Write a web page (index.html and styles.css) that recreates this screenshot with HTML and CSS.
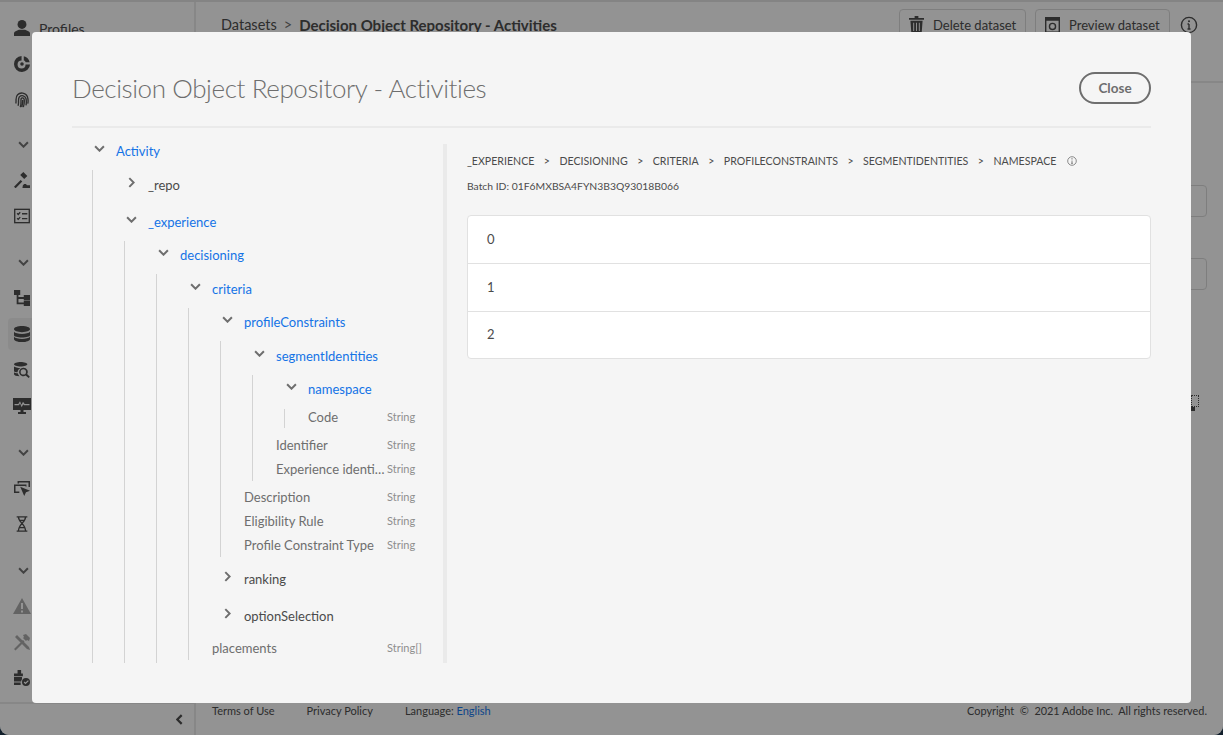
FILE: index.html
```html
<!DOCTYPE html>
<html lang="en">
<head>
    <meta charset="UTF-8">
    <meta name="viewport" content="width=device-width, initial-scale=1.0">
    <title>Datasets</title>
    <link rel="stylesheet" href="styles.css">
</head>
<body>
    <div class="app">
        <aside class="sidebar">
            <nav class="side-nav">
                <div class="side-item">
                    <svg class="side-icon" viewBox="0 0 18 18"><circle cx="9" cy="5" r="5"/><path d="M0 18v-3c0-2 3-3 5.500-4h7c2.500 1 5.500 2 5.500 4v3z"/></svg>
                    <span class="side-label">Profiles</span>
                </div>
                <div class="side-item">
                    <svg class="side-icon" viewBox="0 0 18 18"><path fill-rule="evenodd" d="M8.500 0a9 9 0 1 0 9.500 9.500h-5A4.500 4.500 0 1 1 8.500 5zM9 7a2 2 0 1 0 0 4 2 2 0 0 0 0-4zM11 .4v4.400a5 5 0 0 1 2.200 2.200h4.400A9 9 0 0 0 11 .4z"/></svg>
                </div>
                <div class="side-item">
                    <svg class="side-icon side-icon--line" viewBox="0 0 18 18"><path d="M2 13c1-3-1-7 2-10 3-3 9-2.500 11 2 1 3 1 6 .5 8M4.500 15.500c1.500-3-.5-7 1.500-10 2.500-2.500 6.500-1.500 7.500 2 .5 2.500.5 5 0 7.500M7 17c1.500-3 .5-7 1-9.500 1-1.500 3-1 3.500 1 .3 2.500 0 5.500-1 8.500M9.700 9c.3 3-.3 5.500-1 8"/></svg>
                </div>
                <div class="side-chevron"><svg class="chevron" viewBox="0 0 10 6"><path d="M1 1l4 4 4-4"/></svg></div>
                <div class="side-item">
                    <svg class="side-icon" viewBox="0 0 18 18"><path d="M0 16.500L7.500 9l1.800 1.800-7.500 7.500zM7 3.500l3.500-3.500 4.500 4.500-3.500 3.500zM9.500 18H18v-3h-3.500l-1-1.500h-2L10 15z"/></svg>
                </div>
                <div class="side-item">
                    <svg class="side-icon side-icon--line" viewBox="0 0 18 18"><rect x=".8" y="1.500" width="16.400" height="15"/><path d="M3.500 6l1.300 1.300L7 4.800M3.500 11.500l1.300 1.300L7 10.300M9 6.500h6M9 12h6"/></svg>
                </div>
                <div class="side-chevron side-chevron--gap"><svg class="chevron" viewBox="0 0 10 6"><path d="M1 1l4 4 4-4"/></svg></div>
                <div class="side-item">
                    <svg class="side-icon" viewBox="0 0 18 18"><path d="M0 0h7v5.500H5V8h6V5.500h7v6h-7V10H5v4h6v-2h7v6h-7v-2H3V5.500H0z"/></svg>
                </div>
                <div class="side-item side-item--active">
                    <svg class="side-icon" viewBox="0 0 18 18"><path d="M0 3.500C0 1.500 4 0 9 0s9 1.500 9 3.500S14 7 9 7 0 5.500 0 3.500zM0 6.500C1 8 5 9 9 9s8-1 9-2.500v4C18 12 14 13 9 13s-9-1-9-2.500zM0 12c1 1.500 5 2.500 9 2.500s8-1 9-2.500v2.500c0 2-4 3.500-9 3.500s-9-1.500-9-3.500z"/></svg>
                </div>
                <div class="side-item">
                    <svg class="side-icon" viewBox="0 0 18 18"><path fill-rule="evenodd" d="M0 2.500C0 1.200 3.500 0 7.500 0S15 1.200 15 2.500 11.500 5 7.500 5 0 3.800 0 2.500zM0 5c1 1 4 1.700 7.500 1.700C5.500 7.500 4 9.500 4 11.500c-2 0-3.500-.5-4-1.200zM0 11.500c.8.600 2.400 1.100 4.200 1.200.3 1.200 1 2.300 2 3.200C3 15.800 0 15 0 13.700zM10.500 6.500a4.700 4.700 0 1 0 2.600 8.600l3.400 2.900 1.300-1.300-3-3.100a4.700 4.700 0 0 0-4.300-7.100zm0 1.700a3 3 0 1 1 0 6 3 3 0 0 1 0-6z"/></svg>
                </div>
                <div class="side-item">
                    <svg class="side-icon side-icon--wide" viewBox="0 0 18 18"><path d="M0 1h18v12h-7.500v2H13v2H5v-2h2.500v-2H0zM1.500 7v1.300H6l1-2 1.700 4 1.500-3 .8 1h5.500V7h-4.800L10 4.800 8.500 7.800 7 4.300 5.300 7z" fill-rule="evenodd"/></svg>
                </div>
                <div class="side-chevron side-chevron--gap"><svg class="chevron" viewBox="0 0 10 6"><path d="M1 1l4 4 4-4"/></svg></div>
                <div class="side-item">
                    <svg class="side-icon" viewBox="0 0 18 18"><path fill-rule="evenodd" d="M4 1h14v7h-1.700V2.700H5.700V4H4zM0 5h14v2.500l-1.700-.8V6.700H1.700V13H6v1.700H0zM7 7.500l11 4.500-4.500 1.800L11.500 18z"/></svg>
                </div>
                <div class="side-item">
                    <svg class="side-icon side-icon--line" viewBox="0 0 18 18"><path d="M3 1h12M3 17h12M5 1c0 6 8 8 8 16M13 1c0 6-8 8-8 16M6 5h6M6 13h6"/></svg>
                </div>
                <div class="side-chevron side-chevron--gap"><svg class="chevron" viewBox="0 0 10 6"><path d="M1 1l4 4 4-4"/></svg></div>
                <div class="side-item">
                    <svg class="side-icon side-icon--muted" viewBox="0 0 18 18"><path fill-rule="evenodd" d="M9 1l9 16H0zM8 6v6h2V6zm0 7.500v2h2v-2z"/></svg>
                </div>
                <div class="side-item">
                    <svg class="side-icon side-icon--muted" viewBox="0 0 18 18"><path d="M1 16l9-9 1.500 1.500-9 9zM10 2l3-1 4 4-1 3-2-1-1 1-3-3 1-1zM2 4l2-2 12 12 1 3-3-1z"/></svg>
                </div>
                <div class="side-item">
                    <svg class="side-icon" viewBox="0 0 18 18"><path fill-rule="evenodd" d="M0 4h4V0h4v4h2v3H0zM0 8h9v2.500A6 6 0 0 0 8 13H0zM0 14h7.500v3H0zM13.500 9a4.500 4.500 0 1 0 0 9 4.500 4.500 0 0 0 0-9zm2.200 2.500l1 1-3.800 3.500-2-2 1-1 1 1z"/></svg>
                </div>
            </nav>
            <div class="side-foot"><svg class="chevron chevron--left" viewBox="0 0 10 6"><path d="M1 1l4 4 4-4"/></svg></div>
        </aside>
        <main class="page">
            <header class="page-head">
                <div class="crumbs">
                    <span>Datasets</span>
                    <span class="crumb-sep">&gt;</span>
                    <strong class="crumb-now">Decision Object Repository - Activities</strong>
                </div>
                <button class="ghost-btn ghost-btn--delete">
                    <svg class="btn-icon" viewBox="0 0 16 18"><path d="M6 0h4v2h6v2H0V2h6zM1.500 5h13L13.500 18h-11zM4.500 7v9h1V7zM7.500 7v9h1V7zM10.500 7v9h1V7z" fill-rule="evenodd"/></svg>
                    Delete dataset
                </button>
                <button class="ghost-btn ghost-btn--preview">
                    <svg class="btn-icon" viewBox="0 0 16 18"><path fill-rule="evenodd" d="M0 1h16v17H0zM1.500 5v11.500h13V5zM8 7a4 4 0 1 0 0 8 4 4 0 0 0 0-8zm0 1.500a2.500 2.500 0 1 1 0 5 2.500 2.500 0 0 1 0-5z"/></svg>
                    Preview dataset
                </button>
                <svg class="head-info" viewBox="0 0 18 18"><circle cx="9" cy="9" r="7.600"/><path d="M9 8v5M7.500 13h3M7.500 8H9"/><circle class="dot" cx="9" cy="5.200" r="1"/></svg>
            </header>
            <div class="page-body">
                <div class="ghost-card ghost-card--first"></div>
                <div class="ghost-card"></div>
                <div class="drop-handle"></div>
            </div>
            <footer class="page-foot">
                <a>Terms of Use</a>
                <a>Privacy Policy</a>
                <span>Language: <span class="lang">English</span></span>
                <span class="copyright">Copyright &nbsp;©&nbsp; 2021 Adobe Inc. &nbsp;All rights reserved.</span>
            </footer>
        </main>
    </div>

    <div class="overlay"></div>

    <section class="modal">
        <div class="modal-head">
            <h1 class="modal-title">Decision Object Repository - Activities</h1>
            <button class="close-btn">Close</button>
        </div>
        <div class="modal-body">
            <div class="tree-panel">
                <div class="tree">
                    <div class="tree-row tree-row--root">
                        <svg class="chevron" viewBox="0 0 10 6"><path d="M1 1l4 4 4-4"/></svg>
                        <span class="tree-name">Activity</span>
                    </div>
                    <div class="tree-kids tree-kids--first tree-kids--long">
                        <div class="tree-row">
                            <svg class="chevron chevron--right" viewBox="0 0 10 6"><path d="M1 1l4 4 4-4"/></svg>
                            <span class="tree-name tree-name--closed">_repo</span>
                        </div>
                        <div class="tree-row tree-row--next">
                            <svg class="chevron" viewBox="0 0 10 6"><path d="M1 1l4 4 4-4"/></svg>
                            <span class="tree-name">_experience</span>
                        </div>
                        <div class="tree-kids tree-kids--long">
                            <div class="tree-row">
                                <svg class="chevron" viewBox="0 0 10 6"><path d="M1 1l4 4 4-4"/></svg>
                                <span class="tree-name">decisioning</span>
                            </div>
                            <div class="tree-kids tree-kids--long">
                                <div class="tree-row">
                                    <svg class="chevron" viewBox="0 0 10 6"><path d="M1 1l4 4 4-4"/></svg>
                                    <span class="tree-name">criteria</span>
                                </div>
                                <div class="tree-kids tree-kids--tail">
                                    <div class="tree-row">
                                        <svg class="chevron" viewBox="0 0 10 6"><path d="M1 1l4 4 4-4"/></svg>
                                        <span class="tree-name">profileConstraints</span>
                                    </div>
                                    <div class="tree-kids tree-kids--tail">
                                        <div class="tree-row">
                                            <svg class="chevron" viewBox="0 0 10 6"><path d="M1 1l4 4 4-4"/></svg>
                                            <span class="tree-name">segmentIdentities</span>
                                        </div>
                                        <div class="tree-kids tree-kids--tail">
                                            <div class="tree-row">
                                                <svg class="chevron" viewBox="0 0 10 6"><path d="M1 1l4 4 4-4"/></svg>
                                                <span class="tree-name">namespace</span>
                                            </div>
                                            <div class="tree-kids tree-kids--tail">
                                                <div class="tree-leaf"><span class="leaf-name">Code</span><span class="leaf-type">String</span></div>
                                            </div>
                                            <div class="tree-leaf tree-leaf--after"><span class="leaf-name">Identifier</span><span class="leaf-type">String</span></div>
                                            <div class="tree-leaf"><span class="leaf-name">Experience identifier</span><span class="leaf-type">String</span></div>
                                        </div>
                                        <div class="tree-leaf tree-leaf--tight"><span class="leaf-name">Description</span><span class="leaf-type">String</span></div>
                                        <div class="tree-leaf"><span class="leaf-name">Eligibility Rule</span><span class="leaf-type">String</span></div>
                                        <div class="tree-leaf"><span class="leaf-name">Profile Constraint Type</span><span class="leaf-type">String</span></div>
                                    </div>
                                    <div class="tree-row tree-row--after">
                                        <svg class="chevron chevron--right" viewBox="0 0 10 6"><path d="M1 1l4 4 4-4"/></svg>
                                        <span class="tree-name tree-name--closed">ranking</span>
                                    </div>
                                    <div class="tree-row tree-row--next">
                                        <svg class="chevron chevron--right" viewBox="0 0 10 6"><path d="M1 1l4 4 4-4"/></svg>
                                        <span class="tree-name tree-name--closed">optionSelection</span>
                                    </div>
                                    <div class="tree-leaf tree-leaf--last"><span class="leaf-name">placements</span><span class="leaf-type">String[]</span></div>
                                </div>
                            </div>
                        </div>
                    </div>
                </div>
            </div>
            <div class="tree-track"></div>
            <div class="detail">
                <div class="path">
                    <span>_EXPERIENCE</span><span class="path-sep">&gt;</span>
                    <span>DECISIONING</span><span class="path-sep">&gt;</span>
                    <span>CRITERIA</span><span class="path-sep">&gt;</span>
                    <span>PROFILECONSTRAINTS</span><span class="path-sep">&gt;</span>
                    <span>SEGMENTIDENTITIES</span><span class="path-sep">&gt;</span>
                    <span>NAMESPACE</span>
                    <svg class="path-info" viewBox="0 0 10 10"><circle cx="5" cy="5" r="4.300"/><path d="M5 4.500v2.800M4 7.300h2"/><circle class="dot" cx="5" cy="2.800" r=".6"/></svg>
                </div>
                <div class="batch">Batch ID: 01F6MXBSA4FYN3B3Q93018B066</div>
                <ul class="values">
                    <li>0</li>
                    <li>1</li>
                    <li>2</li>
                </ul>
            </div>
        </div>
    </section>
</body>
</html>
```

FILE: styles.css
```css
* {
    box-sizing: border-box;
}
html {
    background: #12202c;
}
body {
    position: relative;
    height: 100vh;
    margin: 0;
    overflow: hidden;
    font-family: Lato, "Open Sans", sans-serif;
    color: #4b4b4b;
    background: #f5f5f5;
    border-radius: 0 0 9px 9px;
}
.chevron {
    width: 11px;
    height: 7px;
    flex: none;
    fill: none;
    stroke: #6e6e6e;
    stroke-width: 1.8;
}
.chevron--right {
    transform: rotate(-90deg);
}
.chevron--left {
    transform: rotate(90deg);
    stroke: #4b4b4b;
    stroke-width: 2;
}

/* page behind the dialog */
.app {
    display: flex;
    height: 100%;
    border-top: 2px solid #dcdcdc;
}
.sidebar {
    display: flex;
    flex-direction: column;
    justify-content: space-between;
    width: 196px;
    flex: none;
    border-right: 2px solid #e1e1e1;
}
.side-nav {
    padding-top: 8px;
}
.side-item {
    display: flex;
    align-items: center;
    gap: 9px;
    height: 36px;
    padding-left: 14px;
}
.side-item--active {
    width: 60px;
    height: 32px;
    margin: 2px 0 2px 8px;
    padding-left: 6px;
    background: #e8e8e8;
    border-radius: 4px;
}
.side-icon {
    width: 16px;
    height: 16px;
    flex: none;
    fill: #4b4b4b;
}
.side-icon--wide {
    width: 18px;
    height: 18px;
    margin-left: -1px;
}
.side-icon--line {
    fill: none;
    stroke: #4b4b4b;
    stroke-width: 1.5;
}
.side-icon--muted {
    width: 18px;
    height: 18px;
    margin-left: -1px;
    fill: #a6a6a6;
}
.side-label {
    font-size: 14px;
}
.side-chevron {
    display: flex;
    align-items: center;
    height: 36px;
    margin-top: 8px;
    padding-left: 18px;
}
.side-chevron--gap {
    margin-top: 10px;
}
.side-foot {
    display: flex;
    justify-content: flex-end;
    align-items: center;
    height: 33px;
    padding-right: 9px;
    border-top: 2px solid #e1e1e1;
}
.page {
    display: flex;
    flex-direction: column;
    flex: 1;
    min-width: 0;
}
.page-head {
    display: flex;
    align-items: center;
    height: 81px;
    padding: 0 25px 34px;
    border-bottom: 2px solid #e1e1e1;
}
.crumbs {
    display: flex;
    align-items: center;
    flex: 1;
    font-size: 14.5px;
}
.crumb-sep {
    margin: 0 7px 0 7px;
    color: #6e6e6e;
}
.crumb-now {
    font-size: 15px;
}
.ghost-btn {
    display: flex;
    align-items: center;
    gap: 9px;
    height: 32px;
    padding: 0 9px;
    font: inherit;
    font-size: 13px;
    white-space: nowrap;
    color: #4b4b4b;
    background: none;
    border: 1px solid #d3d3d3;
    border-radius: 4px;
}
.ghost-btn--delete {
    width: 127px;
    margin-right: 9px;
}
.ghost-btn--preview {
    width: 135px;
}
.btn-icon {
    width: 15px;
    height: 17px;
    flex: none;
    fill: #4b4b4b;
}
.head-info {
    width: 18px;
    height: 18px;
    margin-left: 10px;
    fill: none;
    stroke: #4b4b4b;
    stroke-width: 1.4;
}
.dot {
    fill: #4b4b4b;
    stroke: none;
}
.page-body {
    flex: 1;
    padding: 102px 16px 0 600px;
}
.ghost-card {
    height: 32px;
    margin-top: 41px;
    border: 1px solid #d3d3d3;
    border-radius: 4px;
}
.ghost-card--first {
    margin-top: 0;
}
.drop-handle {
    position: relative;
    width: 8px;
    height: 12px;
    margin: 105px 8px 0 auto;
    border: 1px dotted #4b4b4b;
}
.drop-handle::after {
    content: "";
    position: absolute;
    left: -1px;
    bottom: -5px;
    width: 4px;
    height: 4px;
    background: #4b4b4b;
}
.page-foot {
    display: flex;
    gap: 32px;
    height: 33px;
    padding: 2px 16px 0;
    font-size: 11px;
}
.lang {
    color: #1473e6;
}
.copyright {
    margin-left: auto;
    font-size: 10.9px;
}
.overlay {
    position: absolute;
    inset: 0;
    background: rgba(0, 0, 0, 0.4);
}

/* dialog */
.modal {
    position: absolute;
    top: 32px;
    left: 32px;
    width: 1159px;
    height: 671px;
    padding: 0 40px;
    background: #f5f5f5;
    border-radius: 4px;
}
.modal-head {
    display: flex;
    justify-content: space-between;
    align-items: center;
    height: 96px;
    padding-top: 18px;
    border-bottom: 2px solid #eaeaea;
}
.modal-title {
    margin: 0;
    font-size: 26px;
    font-weight: 300;
    letter-spacing: -0.4px;
    color: #6e6e6e;
}
.close-btn {
    width: 72px;
    height: 32px;
    font: inherit;
    font-size: 13.5px;
    font-weight: 700;
    color: #6e6e6e;
    background: none;
    border: 2px solid #6e6e6e;
    border-radius: 16px;
}
.modal-body {
    display: flex;
    height: 535px;
}
.tree-panel {
    width: 371px;
    flex: none;
    overflow: hidden;
    padding: 0 20px;
}
.tree-track {
    width: 4px;
    flex: none;
    margin-top: 16px;
    background: #eaeaea;
}
.tree {
    margin-top: 8px;
    font-size: 13px;
}
.tree-row {
    display: flex;
    align-items: center;
    height: 28px;
    margin-left: 31px;
    padding-left: 2px;
}
.tree-row--root {
    margin-left: 0;
}
.tree-row--next {
    margin-top: 9px;
}
.tree-row--after {
    margin-top: 8px;
}
.tree-row .chevron {
    margin-bottom: 4px;
}
.tree-name {
    margin-left: 11px;
    padding-top: 1px;
    color: #1473e6;
}
.tree-name--closed {
    color: #4b4b4b;
}
.tree-kids {
    margin-top: 5.6px;
    margin-left: 31px;
    border-left: 1px solid #d3d3d3;
}
.tree-kids--first {
    margin-top: 6px;
    margin-left: 0;
}
.tree-kids--long {
    padding-bottom: 30px;
}
.tree-kids--tail {
    padding-bottom: 2px;
}
.tree-leaf {
    display: flex;
    align-items: center;
    height: 19px;
    margin-top: 5px;
    padding-left: 23px;
    color: #6e6e6e;
}
.tree-kids > .tree-leaf:first-child {
    height: 17px;
    margin-top: 0;
}
.tree-leaf--after {
    margin-top: 8px;
}
.tree-leaf--tight {
    margin-top: 7px;
}
.tree-leaf--last {
    margin-top: 9px;
}
.leaf-name {
    flex: 1;
    min-width: 0;
    overflow: hidden;
    white-space: nowrap;
    text-overflow: ellipsis;
}
.leaf-type {
    width: 36px;
    flex: none;
    margin: 0 0 2px 2px;
    font-size: 11px;
    color: #8e8e8e;
}
.detail {
    flex: 1;
    min-width: 0;
    padding: 25px 0 0 20px;
}
.path {
    display: flex;
    align-items: center;
    height: 16px;
    font-size: 10.6px;
    color: #4b4b4b;
}
.path-sep {
    margin: 0 9.500px;
}
.path-info {
    width: 10px;
    height: 10px;
    margin-left: 11px;
    fill: none;
    stroke: #6e6e6e;
    stroke-width: 0.8;
}
.batch {
    margin-top: 11px;
    font-size: 10.350px;
    color: #4b4b4b;
}
.values {
    margin: 23px 0 0;
    padding: 0;
    list-style: none;
    font-size: 13px;
    background: #fff;
    border: 1px solid #e1e1e1;
    border-radius: 4px;
}
.values li {
    height: 48px;
    padding: 15px 19px 0;
    border-top: 1px solid #e1e1e1;
}
.values li:first-child {
    height: 47px;
    border-top: 0;
}
.values li:last-child {
    height: 47px;
    padding-top: 14px;
}
```
